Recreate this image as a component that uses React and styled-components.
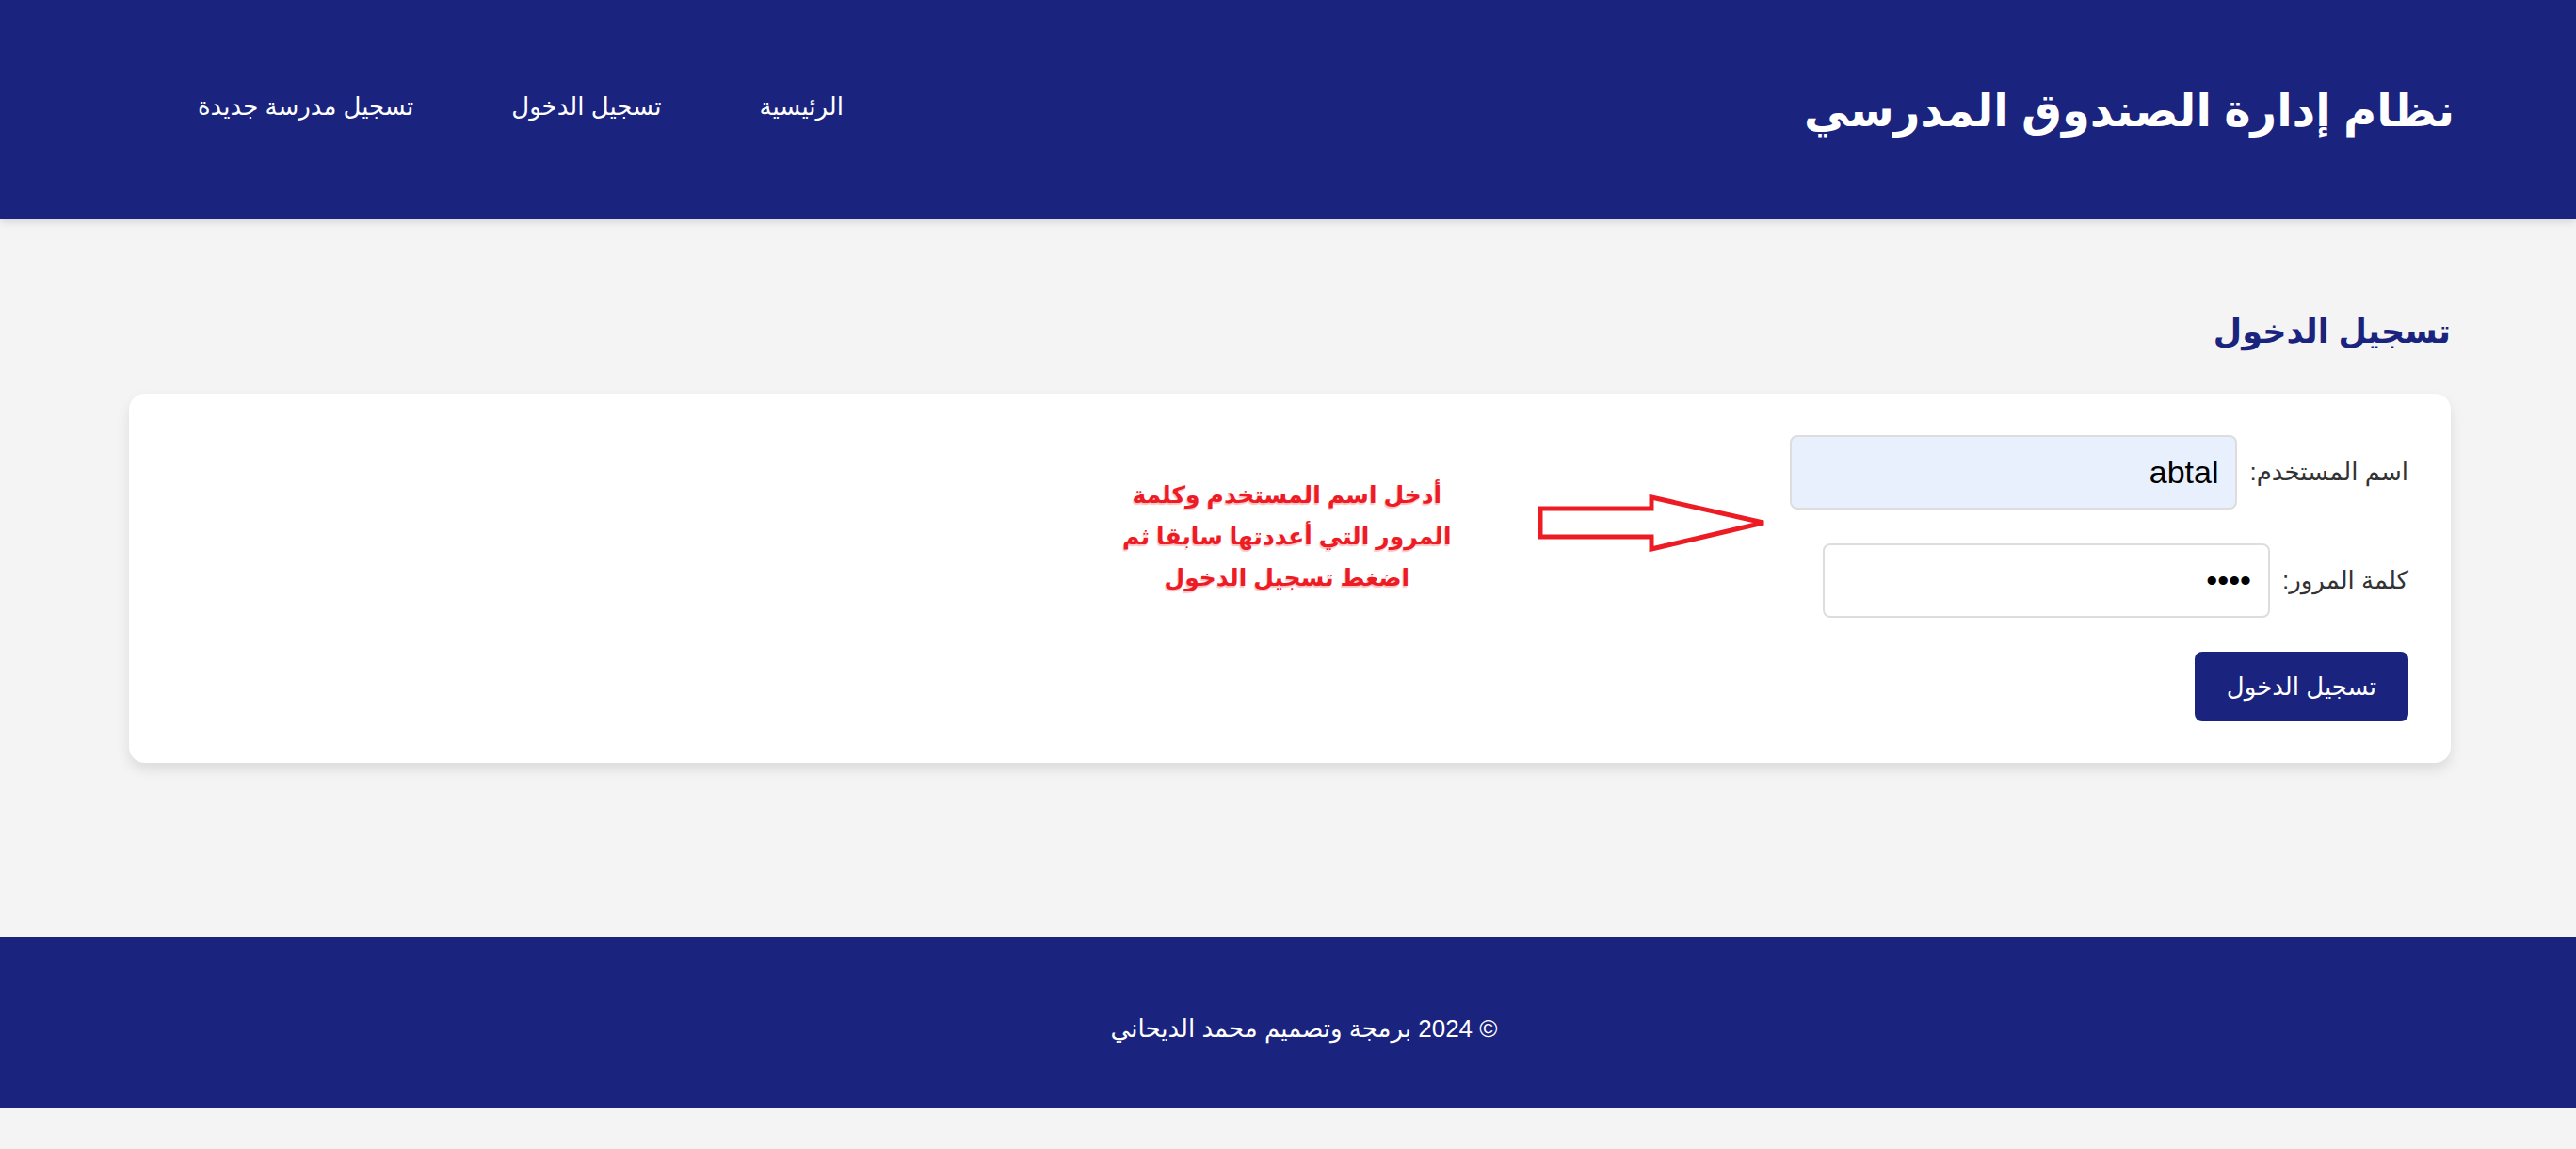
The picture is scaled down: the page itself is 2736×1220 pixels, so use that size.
import React from "react";
import styled, { createGlobalStyle } from "styled-components";

const Global = createGlobalStyle`
  html, body {
    margin: 0;
    padding: 0;
    background: #f4f4f4;
  }
  body {
    direction: rtl;
    font-family: "Liberation Sans", "DejaVu Sans", sans-serif;
    color: #333;
  }
`;

const Header = styled.header`
  height: 233px;
  background: #1a237e;
  display: flex;
  align-items: center;
  justify-content: space-between;
  padding: 0 129px 0 210px;
  box-shadow: 0 3px 8px rgba(0, 0, 0, 0.12);
`;

const Title = styled.h1`
  margin: 0;
  color: #fff;
  font-size: 48px;
  font-weight: bold;
`;

const Nav = styled.nav`
  display: flex;
  gap: 104px;
  padding-bottom: 6px;
`;

const NavLink = styled.a`
  color: #fff;
  font-size: 26px;
  text-decoration: none;
`;

const Main = styled.main`
  padding: 95px 133px 185px 137px;
`;

const PageTitle = styled.h2`
  margin: 0 0 42px;
  color: #1a237e;
  font-size: 35px;
  font-weight: bold;
  line-height: 48px;
`;

const Card = styled.section`
  background: #fff;
  border-radius: 17px;
  padding: 44px 45px;
  box-shadow: 0 7px 14px rgba(0, 0, 0, 0.1);
  display: flex;
  align-items: flex-start;
`;

const Form = styled.form`
  display: flex;
  flex-direction: column;
  align-items: flex-start;
  gap: 36px;
`;

const Row = styled.div`
  display: flex;
  align-items: center;
  gap: 13px;
`;

const Label = styled.label`
  font-size: 26px;
  color: #333;
`;

const Input = styled.input`
  box-sizing: border-box;
  width: 475px;
  height: 79px;
  padding: 0 18px;
  font-family: "Liberation Sans", sans-serif;
  font-size: 34px;
  color: #000;
  border: 2px solid #ddd;
  border-radius: 8px;
  background: ${(p) => (p.$filled ? "#e8f0fe" : "#fff")};
  direction: rtl;
  outline: none;
`;

const Button = styled.button`
  height: 74px;
  padding: 0 34px;
  background: #1a237e;
  color: #fff;
  font-family: "Liberation Sans", "DejaVu Sans", sans-serif;
  font-size: 26px;
  border: none;
  border-radius: 8px;
`;

const Arrow = styled.svg`
  flex: none;
  margin-top: 62px;
  margin-right: 24px;
`;

const Hint = styled.p`
  margin: 41px 92px 0 0;
  white-space: nowrap;
  text-align: center;
  color: #ed1c24;
  font-weight: bold;
  font-size: 25px;
  line-height: 44px;
  text-shadow: -1px 2px 1px rgba(237, 28, 36, 0.25);
`;

const Footer = styled.footer`
  box-sizing: border-box;
  height: 181px;
  padding: 14px 0 0 34px;
  background: #1a237e;
  color: #fff;
  font-size: 26px;
  display: flex;
  align-items: center;
  justify-content: center;
`;

export default function App() {
  return (
    <>
      <Global />
      <Header>
        <Title>نظام إدارة الصندوق المدرسي</Title>
        <Nav>
          <NavLink href="#">الرئيسية</NavLink>
          <NavLink href="#">تسجيل الدخول</NavLink>
          <NavLink href="#">تسجيل مدرسة جديدة</NavLink>
        </Nav>
      </Header>
      <Main>
        <PageTitle>تسجيل الدخول</PageTitle>
        <Card>
          <Form onSubmit={(e) => e.preventDefault()}>
            <Row>
              <Label htmlFor="u">اسم المستخدم:</Label>
              <Input id="u" $filled readOnly defaultValue="abtal" />
            </Row>
            <Row>
              <Label htmlFor="p">كلمة المرور:</Label>
              <Input id="p" type="password" readOnly defaultValue="abcd" />
            </Row>
            <Button type="submit">تسجيل الدخول</Button>
          </Form>
          <Arrow width="244" height="63" viewBox="0 0 244 63">
            <polygon
              points="3,16 121,16 121,4 240,31 121,59 121,46 3,46"
              fill="#fff"
              stroke="#ed1c24"
              strokeWidth="5"
              strokeLinejoin="miter"
            />
          </Arrow>
          <Hint>
            أدخل اسم المستخدم وكلمة
            <br />
            المرور التي أعددتها سابقا ثم
            <br />
            اضغط تسجيل الدخول
          </Hint>
        </Card>
      </Main>
      <Footer>© 2024 برمجة وتصميم محمد الديحاني</Footer>
    </>
  );
}
